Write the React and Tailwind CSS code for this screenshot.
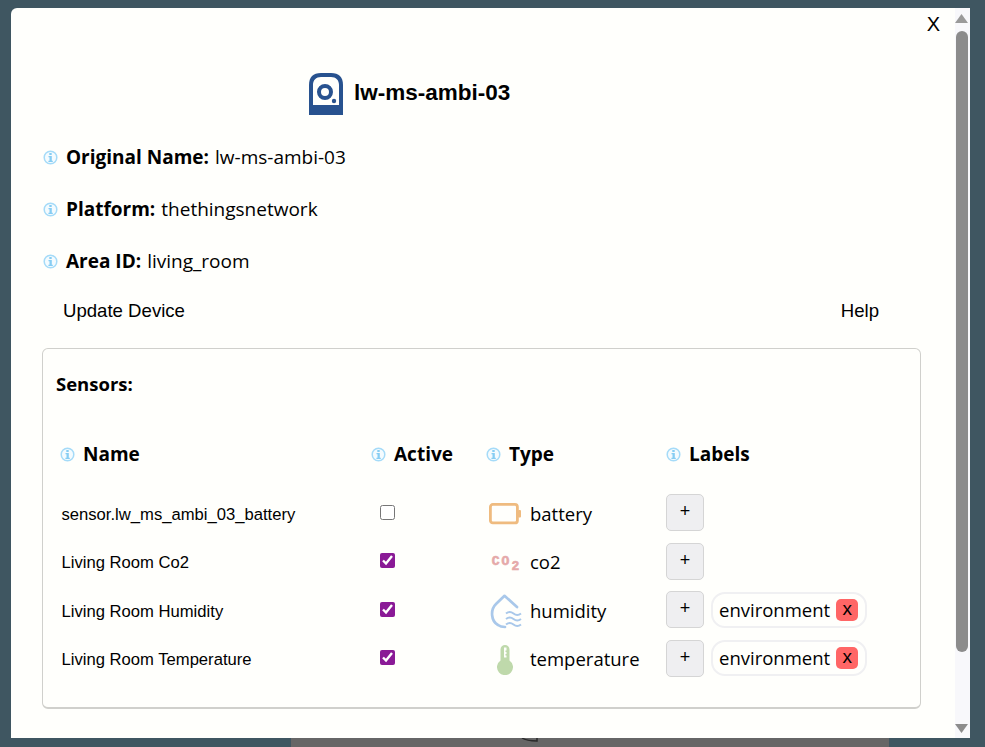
import React from "react";

const Info = ({ className = "" }) => (
  <svg width="15" height="15" viewBox="0 0 15 15" className={"shrink-0 " + className}>
    <circle cx="7.5" cy="7.5" r="6.3" fill="#f4fbfe" stroke="#a5dbf8" strokeWidth="1.5" />
    <rect x="6.3" y="3" width="2.4" height="2" fill="#86cdf3" />
    <path d="M5.5 6.1h3.3v4.6h1v1.2H5.4v-1.2h1.1V7.3h-1z" fill="#86cdf3" />
  </svg>
);

const Device = () => (
  <svg width="34" height="42" viewBox="0 0 34 42">
    <path fillRule="evenodd" d="M0 42V12C0 4 4 0 12 0h10c8 0 12 4 12 12v30zM4 32h26V12c0-5-3-8-8-8H12c-5 0-8 3-8 8z" fill="#28528f" />
    <circle cx="16" cy="19" r="6" fill="none" stroke="#28528f" strokeWidth="4" />
    <circle cx="25" cy="28" r="2.2" fill="#28528f" />
  </svg>
);

const Battery = () => (
  <svg width="32" height="22" viewBox="0 0 32 22">
    <rect x="1.4" y="1.4" width="27" height="18.5" rx="2.5" fill="none" stroke="#efbb7f" strokeWidth="2.8" />
    <rect x="29" y="7" width="3" height="7.5" rx="1" fill="#efbb7f" />
  </svg>
);

const Co2 = () => (
  <span className="flex w-[32px] items-start justify-center pl-[1px] pt-[5px] font-['Liberation_Mono',monospace] font-bold text-[#e5a9a9] [-webkit-text-stroke:0.6px_#e5a9a9]">
    <span className="text-[13px] leading-[14px] tracking-[2px]">CO</span>
    <span className="mt-[5px] text-[13px] leading-[14px]">2</span>
  </span>
);

const Humidity = () => (
  <svg width="32" height="36" viewBox="0 0 32 36" className="ml-[1px] mt-[3px] shrink-0">
    <path d="M27 13 L14.5 1.8 L6 10 C0 16 1 27 8 31 C10 32.5 12 33 15 33" fill="none" stroke="#a9c8ea" strokeWidth="2.7" strokeLinecap="round" strokeLinejoin="round" />
    <path d="M16 19.5c2.500-2 5-2 7.500 0s5 2 7.500 0M16 25c2.500-2 5-2 7.500 0s5 2 7.500 0M16 30.500c2.500-2 5-2 7.500 0s5 2 7.500 0" fill="none" stroke="#a9c8ea" strokeWidth="2" />
  </svg>
);

const Thermo = () => (
  <svg width="16" height="30" viewBox="0 0 16 30" className="mt-[2px] shrink-0">
    <path fillRule="evenodd" d="M3.500 4.500a4.500 4.500 0 0 1 9 0V15.500a8 8 0 1 1-9 0zM7 2.500v10h2.500v-2H8.500v-1.500h1V7h-1V5.500h1v-3z" fill="#bfd9ab" />
  </svg>
);

const Plus = () => (
  <button className="flex h-[37px] w-[38px] shrink-0 items-center justify-center rounded-[5px] border border-[#d5d5d5] bg-[#efeff1] pb-[2px] font-['Liberation_Sans',sans-serif] text-[18px] text-black">+</button>
);

const Tag = () => (
  <div className="flex h-[36px] w-[156px] shrink-0 items-center rounded-[14px] border-2 border-[#f0f0f2] pl-[6px] text-[18.5px] text-black">
    <span>environment</span>
    <span className="ml-[6px] flex h-[22px] w-[22px] items-center justify-center rounded-[5px] bg-[#ff6666] pb-[3px] font-['Liberation_Sans',sans-serif] text-[19px] leading-none">x</span>
  </div>
);

const Meta = ({ label, value }) => (
  <div className="flex h-[52px] items-center pl-[32px]">
    <Info />
    <b className="ml-[8px] text-[19px]">{label}</b>
    <span className="ml-[6px] text-[19px]">{value}</span>
  </div>
);

const Head = ({ children }) => (
  <div className="flex items-center pl-[4px]">
    <Info />
    <b className="ml-[8px] text-[19px]">{children}</b>
  </div>
);

const rows = [
  { name: "sensor.lw_ms_ambi_03_battery", on: false, icon: <Battery />, type: "battery" },
  { name: "Living Room Co2", on: true, icon: <Co2 />, type: "co2" },
  { name: "Living Room Humidity", on: true, icon: <Humidity />, type: "humidity", tag: true },
  { name: "Living Room Temperature", on: true, icon: <Thermo />, type: "temperature", tag: true },
];

export default function App() {
  return (
    <div className="flex h-[747px] w-[985px] flex-col overflow-hidden bg-[#3f5661] pt-[8px] font-['Open_Sans',sans-serif] text-black">
      <div className="ml-[11px] flex h-[730px] w-[959px] shrink-0 overflow-hidden rounded-tl-[6px] bg-[#fffffc]">
        <div className="flex-1">
          <div className="flex justify-end pr-[15px] pt-[5px]">
            <span className="font-['Liberation_Sans',sans-serif] text-[20px] leading-[22px]">X</span>
          </div>
          <div className="mt-[38px] flex items-center pl-[298px]">
            <Device />
            <span className="ml-[11px] pb-[2px] font-['Liberation_Sans',sans-serif] text-[22.5px] font-bold">lw-ms-ambi-03</span>
          </div>
          <div className="mt-[16px]">
            <Meta label="Original Name:" value="lw-ms-ambi-03" />
            <Meta label="Platform:" value="thethingsnetwork" />
            <Meta label="Area ID:" value="living_room" />
          </div>
          <div className="mt-[10px] flex justify-between pl-[52px] pr-[76px] font-['Liberation_Sans',sans-serif] text-[18.6px] leading-[28px]">
            <span>Update Device</span>
            <span>Help</span>
          </div>
          <div className="ml-[31px] mt-[23px] h-[361px] w-[879px] rounded-[6px] border border-[#d0d0cc] border-b-2 px-[13px]">
            <div className="pt-[21px] text-[18.5px] font-bold leading-[28px]">Sensors:</div>
            <div className="mt-[42px] grid grid-cols-[311px_115px_180px_1fr]">
              <Head>Name</Head>
              <Head>Active</Head>
              <Head>Type</Head>
              <Head>Labels</Head>
            </div>
            <div className="mt-[21px] flex flex-col">
              {rows.map((r) => (
                <div key={r.name} className="grid h-[48.5px] grid-cols-[311px_115px_180px_1fr] items-center">
                  <span className="pl-[5.5px] pt-[3px] font-['Liberation_Sans',sans-serif] text-[16.64px]">{r.name}</span>
                  <span className="flex pb-[3px] pl-[13px]">
                    <input type="checkbox" readOnly checked={r.on} className="m-0 h-[15px] w-[15px] accent-[#8a1a96]" />
                  </span>
                  <span className="flex items-center pl-[7px] text-[18.5px]">
                    <span className="flex h-[32px] w-[32px] items-center justify-center">{r.icon}</span>
                    <span className="ml-[9px]">{r.type}</span>
                  </span>
                  <span className="flex items-center gap-[7px] pb-[2px] pl-[4px]">
                    <Plus />
                    {r.tag && <Tag />}
                  </span>
                </div>
              ))}
            </div>
          </div>
        </div>
        <div className="flex w-[15px] shrink-0 flex-col items-center bg-[#f8f8fb] pr-[2px] pt-[6px]">
          <svg width="13" height="10" viewBox="0 0 13 10"><path d="M6.500 0 13 9H0z" fill="#9a9a9a" /></svg>
          <div className="mt-[7px] h-[621px] w-[12px] rounded-[6px] bg-[#8c8c8c]" />
          <svg width="13" height="10" viewBox="0 0 13 10" className="mt-[71px]"><path d="M6.500 10 13 1H0z" fill="#8c8c8c" /></svg>
        </div>
      </div>
      <div className="ml-[291px] h-[9px] w-[598px] shrink-0 bg-[#666666] pl-[230px]">
        <svg width="18" height="4" viewBox="0 0 18 4"><path d="M1 0c3 2 9 3 15 3V0" fill="none" stroke="#2a2a2a" strokeWidth="1.500" /></svg>
      </div>
    </div>
  );
}
